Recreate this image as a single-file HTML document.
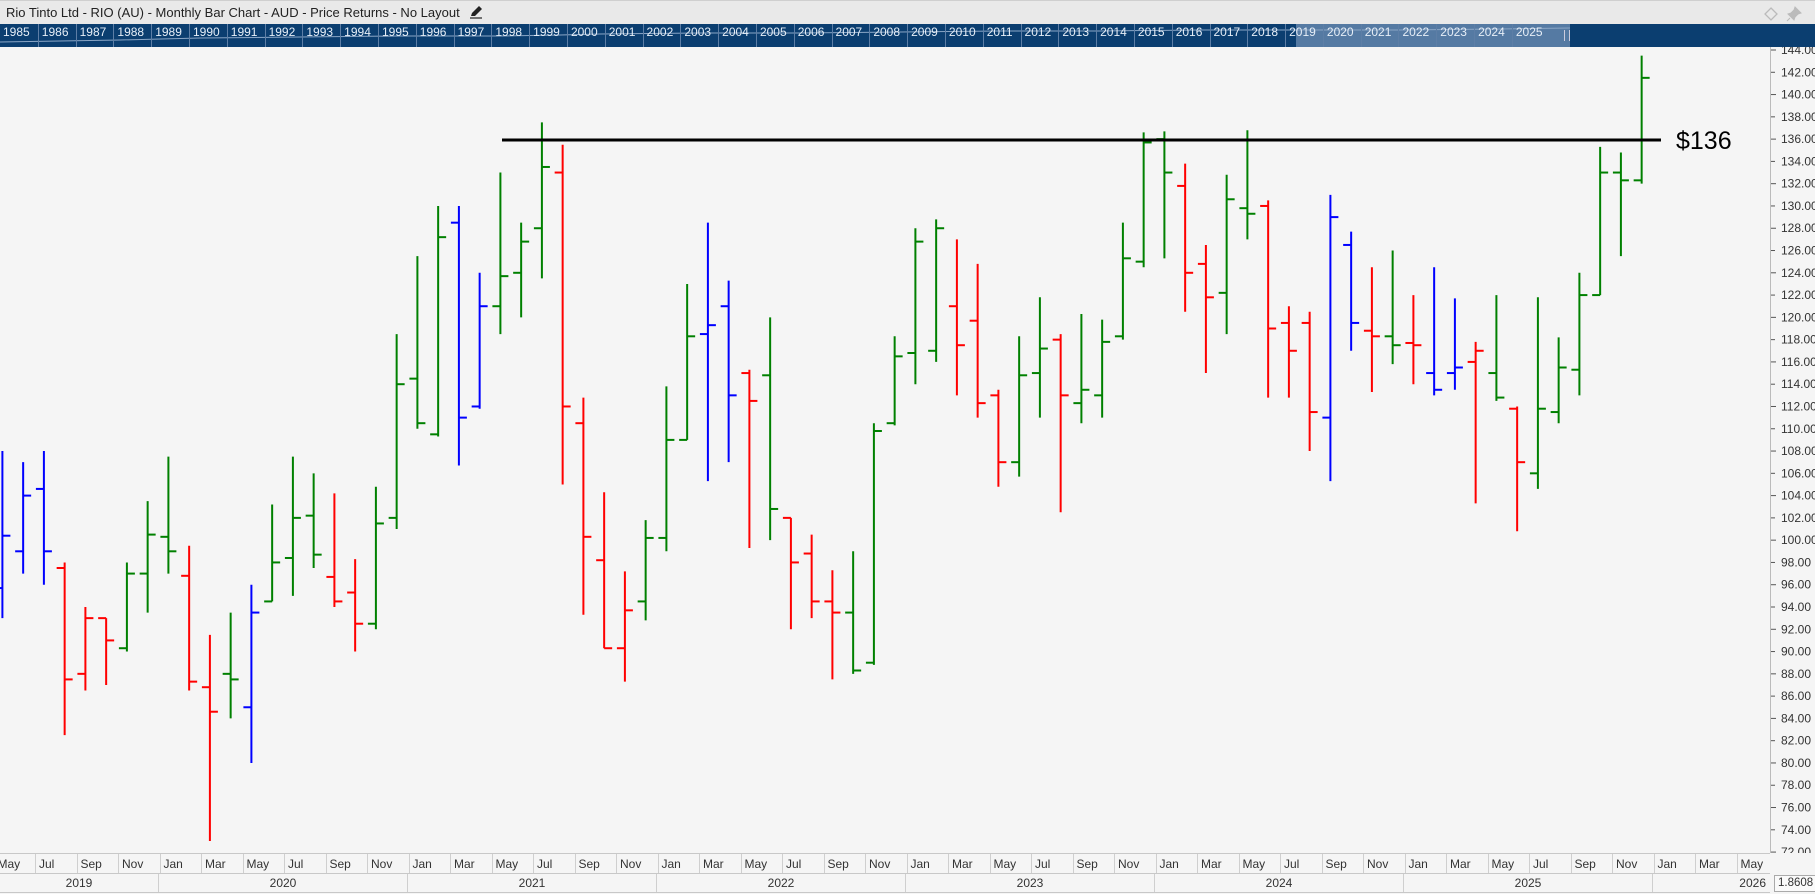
<!DOCTYPE html>
<html><head><meta charset="utf-8">
<style>
*{margin:0;padding:0;box-sizing:border-box}
body{width:1815px;height:894px;overflow:hidden;background:#f5f5f5;font-family:"Liberation Sans",sans-serif;position:relative}
#title{position:absolute;left:0;top:0;width:1815px;height:24px;background:#e9e9e9;border-top:1px solid #cfcfcf;font-size:13px;color:#222;line-height:24px;padding-left:6px}
#nav{position:absolute;left:0;top:24px;width:1815px;height:23px;background:#0b3e70;overflow:hidden}
#nav .sel{position:absolute;left:1296px;top:0;width:274px;height:23px;background:#557aa3}
#nav .yrs{position:absolute;left:0;top:0;display:flex;height:23px}
#nav .yrs span{width:37.8px;flex:none;border-left:1px solid #5d7ea6;color:#e6eef7;font-size:12px;padding-left:3px;line-height:17px;height:23px}
#nav .yrs span:first-child{border-left:none}
#chart{position:absolute;left:0;top:47px}
#mrow{position:absolute;left:0;top:853px;width:1770px;height:21px;border-top:1px solid #c8c8c8;border-bottom:1px solid #c8c8c8;overflow:hidden}
#mrow .in{position:absolute;left:-6.5px;top:0;display:flex;height:20px}
#mrow span{width:41.5px;flex:none;border-left:1px solid #cfcfcf;font-size:12px;color:#333;padding-left:3px;line-height:20px}
#yrow{position:absolute;left:0;top:874px;width:1770px;height:19px;border-bottom:1px solid #c8c8c8;font-size:12px;color:#333;line-height:18px}
#yrow div{position:absolute;top:0;height:18px;border-left:1px solid #cfcfcf;text-align:center}
#box{position:absolute;left:1774px;top:875px;width:48px;height:17px;border:1px solid #aaa;background:#fafafa;font-size:11.5px;line-height:15px;padding-left:3px;color:#333;white-space:nowrap}
</style></head><body>
<div id="title">Rio Tinto Ltd - RIO (AU) - Monthly Bar Chart - AUD - Price Returns - No Layout
<svg width="14" height="14" viewBox="0 0 14 14" style="vertical-align:-2px;margin-left:6px"><path d="M2 11 L3 8 L10 1 L13 4 L6 11 Z" fill="#222"/><path d="M1 13 H13" stroke="#222" stroke-width="1.2"/></svg>
<svg style="position:absolute;left:1763px;top:5px" width="16" height="16" viewBox="0 0 16 16"><path d="M8 2 L14 8 L8 14 L2 8 Z" fill="none" stroke="#bbb" stroke-width="1.3"/></svg>
<svg style="position:absolute;left:1786px;top:5px" width="16" height="16" viewBox="0 0 16 16"><path d="M9 1 L15 7 L12 8 L9 11 L8 14 L2 8 L5 7 L8 4 Z M4 12 L1 15" fill="#bbb" stroke="#bbb"/></svg>
</div>
<div id="nav"><div class="sel"></div>
<svg style="position:absolute;left:0;top:0" width="1570" height="23"><polyline points="0,18 60,17 120,16 200,14 300,13 400,12 500,12 560,11 600,10 700,9 800,9 900,8 1000,7 1100,7 1200,6 1300,6 1400,6 1500,5 1570,4" fill="none" stroke="#8aa6c6" stroke-width="1"/></svg>
<div class="yrs"><span>1985</span><span>1986</span><span>1987</span><span>1988</span><span>1989</span><span>1990</span><span>1991</span><span>1992</span><span>1993</span><span>1994</span><span>1995</span><span>1996</span><span>1997</span><span>1998</span><span>1999</span><span>2000</span><span>2001</span><span>2002</span><span>2003</span><span>2004</span><span>2005</span><span>2006</span><span>2007</span><span>2008</span><span>2009</span><span>2010</span><span>2011</span><span>2012</span><span>2013</span><span>2014</span><span>2015</span><span>2016</span><span>2017</span><span>2018</span><span>2019</span><span>2020</span><span>2021</span><span>2022</span><span>2023</span><span>2024</span><span>2025</span></div>
<div style="position:absolute;left:1564px;top:6px;width:6px;height:11px;border-left:1px solid #ccd;border-right:1px solid #ccd"></div>
</div>
<svg id="chart" width="1815" height="806" viewBox="0 47 1815 806">
<g id="bars"></g>
<line x1="502" y1="140" x2="1661" y2="140" stroke="#000" stroke-width="3"/>
<text x="1676" y="149" font-family="Liberation Sans, sans-serif" font-size="25" fill="#000">$136</text>
<line x1="1770.5" y1="47" x2="1770.5" y2="853" stroke="#bbb"/>
<g font-family="Liberation Sans, sans-serif" font-size="12" fill="#333" dominant-baseline="central">
<text x="1781" y="50">144.00</text><text x="1781" y="72.3">142.00</text><text x="1781" y="94.6">140.00</text><text x="1781" y="116.8">138.00</text><text x="1781" y="139.1">136.00</text><text x="1781" y="161.4">134.00</text><text x="1781" y="183.7">132.00</text><text x="1781" y="206">130.00</text><text x="1781" y="228.2">128.00</text><text x="1781" y="250.5">126.00</text><text x="1781" y="272.8">124.00</text><text x="1781" y="295.1">122.00</text><text x="1781" y="317.4">120.00</text><text x="1781" y="339.6">118.00</text><text x="1781" y="361.9">116.00</text><text x="1781" y="384.2">114.00</text><text x="1781" y="406.5">112.00</text><text x="1781" y="428.8">110.00</text><text x="1781" y="451">108.00</text><text x="1781" y="473.3">106.00</text><text x="1781" y="495.6">104.00</text><text x="1781" y="517.9">102.00</text><text x="1781" y="540.2">100.00</text><text x="1781" y="562.4">98.00</text><text x="1781" y="584.7">96.00</text><text x="1781" y="607">94.00</text><text x="1781" y="629.3">92.00</text><text x="1781" y="651.6">90.00</text><text x="1781" y="673.8">88.00</text><text x="1781" y="696.1">86.00</text><text x="1781" y="718.4">84.00</text><text x="1781" y="740.7">82.00</text><text x="1781" y="763">80.00</text><text x="1781" y="785.2">78.00</text><text x="1781" y="807.5">76.00</text><text x="1781" y="829.8">74.00</text><text x="1781" y="852.1">72.00</text>
</g>
<g id="ticks" stroke="#555"></g>
</svg>
<div id="mrow"><div class="in"><span>May</span><span>Jul</span><span>Sep</span><span>Nov</span><span>Jan</span><span>Mar</span><span>May</span><span>Jul</span><span>Sep</span><span>Nov</span><span>Jan</span><span>Mar</span><span>May</span><span>Jul</span><span>Sep</span><span>Nov</span><span>Jan</span><span>Mar</span><span>May</span><span>Jul</span><span>Sep</span><span>Nov</span><span>Jan</span><span>Mar</span><span>May</span><span>Jul</span><span>Sep</span><span>Nov</span><span>Jan</span><span>Mar</span><span>May</span><span>Jul</span><span>Sep</span><span>Nov</span><span>Jan</span><span>Mar</span><span>May</span><span>Jul</span><span>Sep</span><span>Nov</span><span>Jan</span><span>Mar</span><span>May</span></div></div>
<div id="yrow">
<div style="left:0;width:158px;border-left:none">2019</div>
<div style="left:158px;width:249px">2020</div>
<div style="left:407px;width:249px">2021</div>
<div style="left:656px;width:249px">2022</div>
<div style="left:905px;width:249px">2023</div>
<div style="left:1154px;width:249px">2024</div>
<div style="left:1403px;width:249px">2025</div>
<div style="left:1652px;width:118px;text-align:right;padding-right:4px">2026</div>
</div>
<div id="box">1.8608</div>
<script>
var D=[
[4,'b',108,93,95.7,100.4],[5,'b',107,97,99,104],[6,'b',108,96,104.6,99],[7,'r',98,82.5,97.5,87.5],[8,'r',94,86.5,88,93],[9,'r',93,87,93,91],[10,'g',98,90,90.3,97],[11,'g',103.5,93.5,97,100.5],
[12,'g',107.5,97,100.3,99],[13,'r',99.5,86.5,96.8,87.3],[14,'r',91.5,73,86.8,84.6],[15,'g',93.5,84,88,87.5],[16,'b',96,80,85,93.5],[17,'g',103.2,94.5,94.5,98],[18,'g',107.5,95,98.4,102],[19,'g',106,97.5,102.2,98.7],[20,'r',104.2,94,96.7,94.5],[21,'r',98.3,90,95.3,92.5],[22,'g',104.8,92,92.5,101.5],[23,'g',118.5,101,102,114],
[24,'g',125.5,110,114.5,110.5],[25,'g',130,109.3,109.5,127.2],[26,'b',130,106.7,128.5,111],[27,'b',124,111.8,112,121],[28,'g',133,118.5,121,123.7],[29,'g',128.5,120,124,126.8],[30,'g',137.5,123.5,128,133.5],[31,'r',135.5,105,133,112],[32,'r',112.8,93.3,110.5,100.3],[33,'r',104.3,90.3,98.2,90.3],[34,'r',97.2,87.3,90.3,93.7],[35,'g',101.8,92.8,94.5,100.2],
[36,'g',113.8,99,100.2,109],[37,'g',123,109,109,118.3],[38,'b',128.5,105.3,118.5,119.3],[39,'b',123.3,107,121,113],[40,'r',115.3,99.3,115,112.5],[41,'g',120,100,114.8,102.8],[42,'r',102,92,102,98],[43,'r',100.5,93,98.8,94.5],[44,'r',97.3,87.5,94.5,93.5],[45,'g',99,88,93.5,88.3],[46,'g',110.5,88.8,89,109.8],[47,'g',118.3,110.3,110.5,116.5],
[48,'g',128,114,116.8,126.8],[49,'g',128.8,116,117,128],[50,'r',127,113,121,117.5],[51,'r',124.8,111,119.7,112.3],[52,'r',113.5,104.8,113,107],[53,'g',118.3,105.7,107,114.8],[54,'g',121.8,111,115,117.2],[55,'r',118.5,102.5,118,113],[56,'g',120.3,110.5,112.3,113.5],[57,'g',119.8,111,113,117.8],[58,'g',128.5,118,118.3,125.3],[59,'g',136.6,124.5,125,135.7],
[60,'g',136.7,125.3,136,133],[61,'r',133.8,120.5,131.8,124],[62,'r',126.5,115,124.8,121.8],[63,'g',132.8,118.5,122.2,130.6],[64,'g',136.8,127,129.8,129.3],[65,'r',130.5,112.8,130,119],[66,'r',121,112.8,119.5,117],[67,'r',120.5,108,119.5,111.5],[68,'b',131,105.3,111,129],[69,'b',127.7,117,126.5,119.5],[70,'r',124.5,113.3,118.8,118.3],[71,'g',126,115.8,118.3,117.5],
[72,'r',122,114,117.7,117.5],[73,'b',124.5,113,115,113.5],[74,'b',121.7,113.5,115,115.5],[75,'r',117.8,103.3,116,117],[76,'g',122,112.5,115,112.8],[77,'r',112,100.8,111.8,107],[78,'g',121.8,104.6,106,111.8],[79,'g',118.2,110.5,111.5,115.5],[80,'g',124,113,115.3,122],[81,'g',135.3,122,122,133],[82,'g',134.8,125.5,133,132.3],[83,'g',143.5,132,132.3,141.5]];
var C={g:'#008000',r:'#ff0000',b:'#0000ff'};
function Y(v){return 50+(144-v)*11.14}
var s='';
D.forEach(function(d){var x=158+(d[0]-12)*20.75+10.4;var c=C[d[1]];
s+='<line x1="'+x+'" y1="'+Y(d[2])+'" x2="'+x+'" y2="'+Y(d[3])+'" stroke="'+c+'" stroke-width="2"/>';
s+='<line x1="'+(x-8)+'" y1="'+Y(d[4])+'" x2="'+x+'" y2="'+Y(d[4])+'" stroke="'+c+'" stroke-width="2"/>';
s+='<line x1="'+x+'" y1="'+Y(d[5])+'" x2="'+(x+8)+'" y2="'+Y(d[5])+'" stroke="'+c+'" stroke-width="2"/>';});
document.getElementById('bars').innerHTML=s;
var t='';for(var v=72;v<=144;v+=2){var y=Y(v);t+='<line x1="1771" y1="'+y+'" x2="'+(v%4==0?1776:1775)+'" y2="'+y+'"/>';}
document.getElementById('ticks').innerHTML=t;
</script>
</body></html>
